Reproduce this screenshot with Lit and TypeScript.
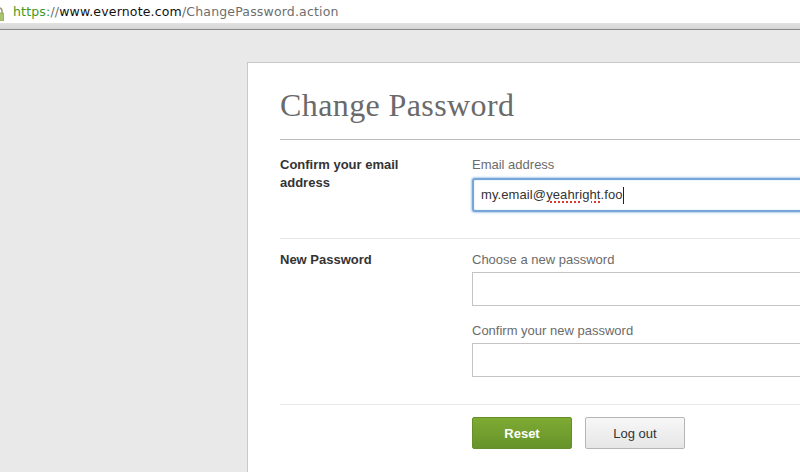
import { LitElement, html, css } from "lit";
import { customElement } from "lit/decorators.js";

@customElement("app-root")
export class AppRoot extends LitElement {
  static styles = css`
    :host { display: block; width: 800px; height: 472px; overflow: hidden; background: #e9e9e9; font-family: "Liberation Sans", Arial, sans-serif; }
    .urlbar { height: 23px; background: #fff; display: flex; align-items: center; gap: 9px; overflow: hidden; }
    .lock { flex: none; margin-left: -6px; margin-top: 5px; display: block; }
    .url { font-family: "DejaVu Sans", sans-serif; font-size: 12.5px; letter-spacing: 0.17px; color: #6e6e6e; white-space: nowrap; margin-top: -1px; }
    .url .s { color: #3f9a24; }
    .url .d { color: #111; }
    .chrome { height: 6px; background: linear-gradient(#e2e2e2, #d6d6d6); border-bottom: 1px solid #888; }
    .page { padding: 32px 0 0 247px; }
    .card { width: 640px; height: 420px; box-sizing: border-box; background: #fff; border: 1px solid #c8c8c8; border-right: 0; border-bottom: 0; padding: 0 0 0 32px; }
    h1 { margin: 0; height: 77px; box-sizing: border-box; padding-top: 22px; font: 400 32px/40px "Liberation Serif", serif; letter-spacing: 0.4px; color: #6a6a6a; border-bottom: 1px solid #bdbdbd; }
    .row { display: grid; grid-template-columns: 192px 1fr; }
    .side { font-size: 13px; font-weight: 700; line-height: 18px; color: #333; width: 150px; }
    label { display: block; font-size: 13px; line-height: 18px; color: #6b6b6b; }
    .first { height: 99px; padding-top: 16px; box-sizing: border-box; border-bottom: 1px solid #e8e8e8; }
    .second { height: 166px; padding-top: 12px; box-sizing: border-box; border-bottom: 1px solid #e8e8e8; }
    .input { box-sizing: border-box; height: 34px; border: 1px solid #c4c4c4; background: #fff; margin-top: 3px; }
    .focus { border: 2px solid #78a6d8; box-shadow: 0 0 2px 1px #b3d0ee, inset 0 0 2px #cfe1f4; border-radius: 3px; padding-left: 7px; font: 13px/30px "Liberation Sans", sans-serif; letter-spacing: 0.1px; color: #333; margin-top: 4px; display: flex; align-items: center; }
    .spell { text-decoration: underline dotted #e0392b 2px; text-underline-offset: 2px; }
    .caret { display: inline-block; width: 1px; height: 17px; background: #222; }
    .gap { margin-top: 16px; }
    .actions { display: flex; gap: 13px; padding: 12px 0 0 192px; }
    button { width: 100px; height: 32px; box-sizing: border-box; border-radius: 2px; font: 13px "Liberation Sans", Arial, sans-serif; padding: 0; }
    .reset { background: linear-gradient(#7eab33, #66932a); border: 1px solid #64902a; color: #fff; font-weight: 700; }
    .logout { background: linear-gradient(#f7f7f7, #e6e6e6); border: 1px solid #b5b5b5; color: #333; }
  `;

  render() {
    return html`
      <div class="urlbar">
        <svg class="lock" width="10" height="14" viewBox="0 0 10 14"><path d="M2 6V4a3 3 0 0 1 6 0v2" fill="none" stroke="#9a9a7a" stroke-width="1.5"/><rect x="0" y="6" width="10" height="8" rx="1" fill="#a9c46c" stroke="#7d9a48" stroke-width=".6"/></svg>
        <div class="url"><span class="s">https</span><span class="s">:</span>//<span class="d">www.evernote.com</span>/ChangePassword.action</div>
      </div>
      <div class="chrome"></div>
      <div class="page">
        <div class="card">
          <h1>Change Password</h1>
          <div class="row first">
            <div class="side">Confirm your email address</div>
            <div>
              <label>Email address</label>
              <div class="input focus"><span>my.email@<span class="spell">yeahright</span>.foo</span><span class="caret"></span></div>
            </div>
          </div>
          <div class="row second">
            <div class="side">New Password</div>
            <div>
              <label>Choose a new password</label>
              <div class="input"></div>
              <label class="gap">Confirm your new password</label>
              <div class="input"></div>
            </div>
          </div>
          <div class="actions">
            <button class="reset">Reset</button>
            <button class="logout">Log out</button>
          </div>
        </div>
      </div>
    `;
  }
}
